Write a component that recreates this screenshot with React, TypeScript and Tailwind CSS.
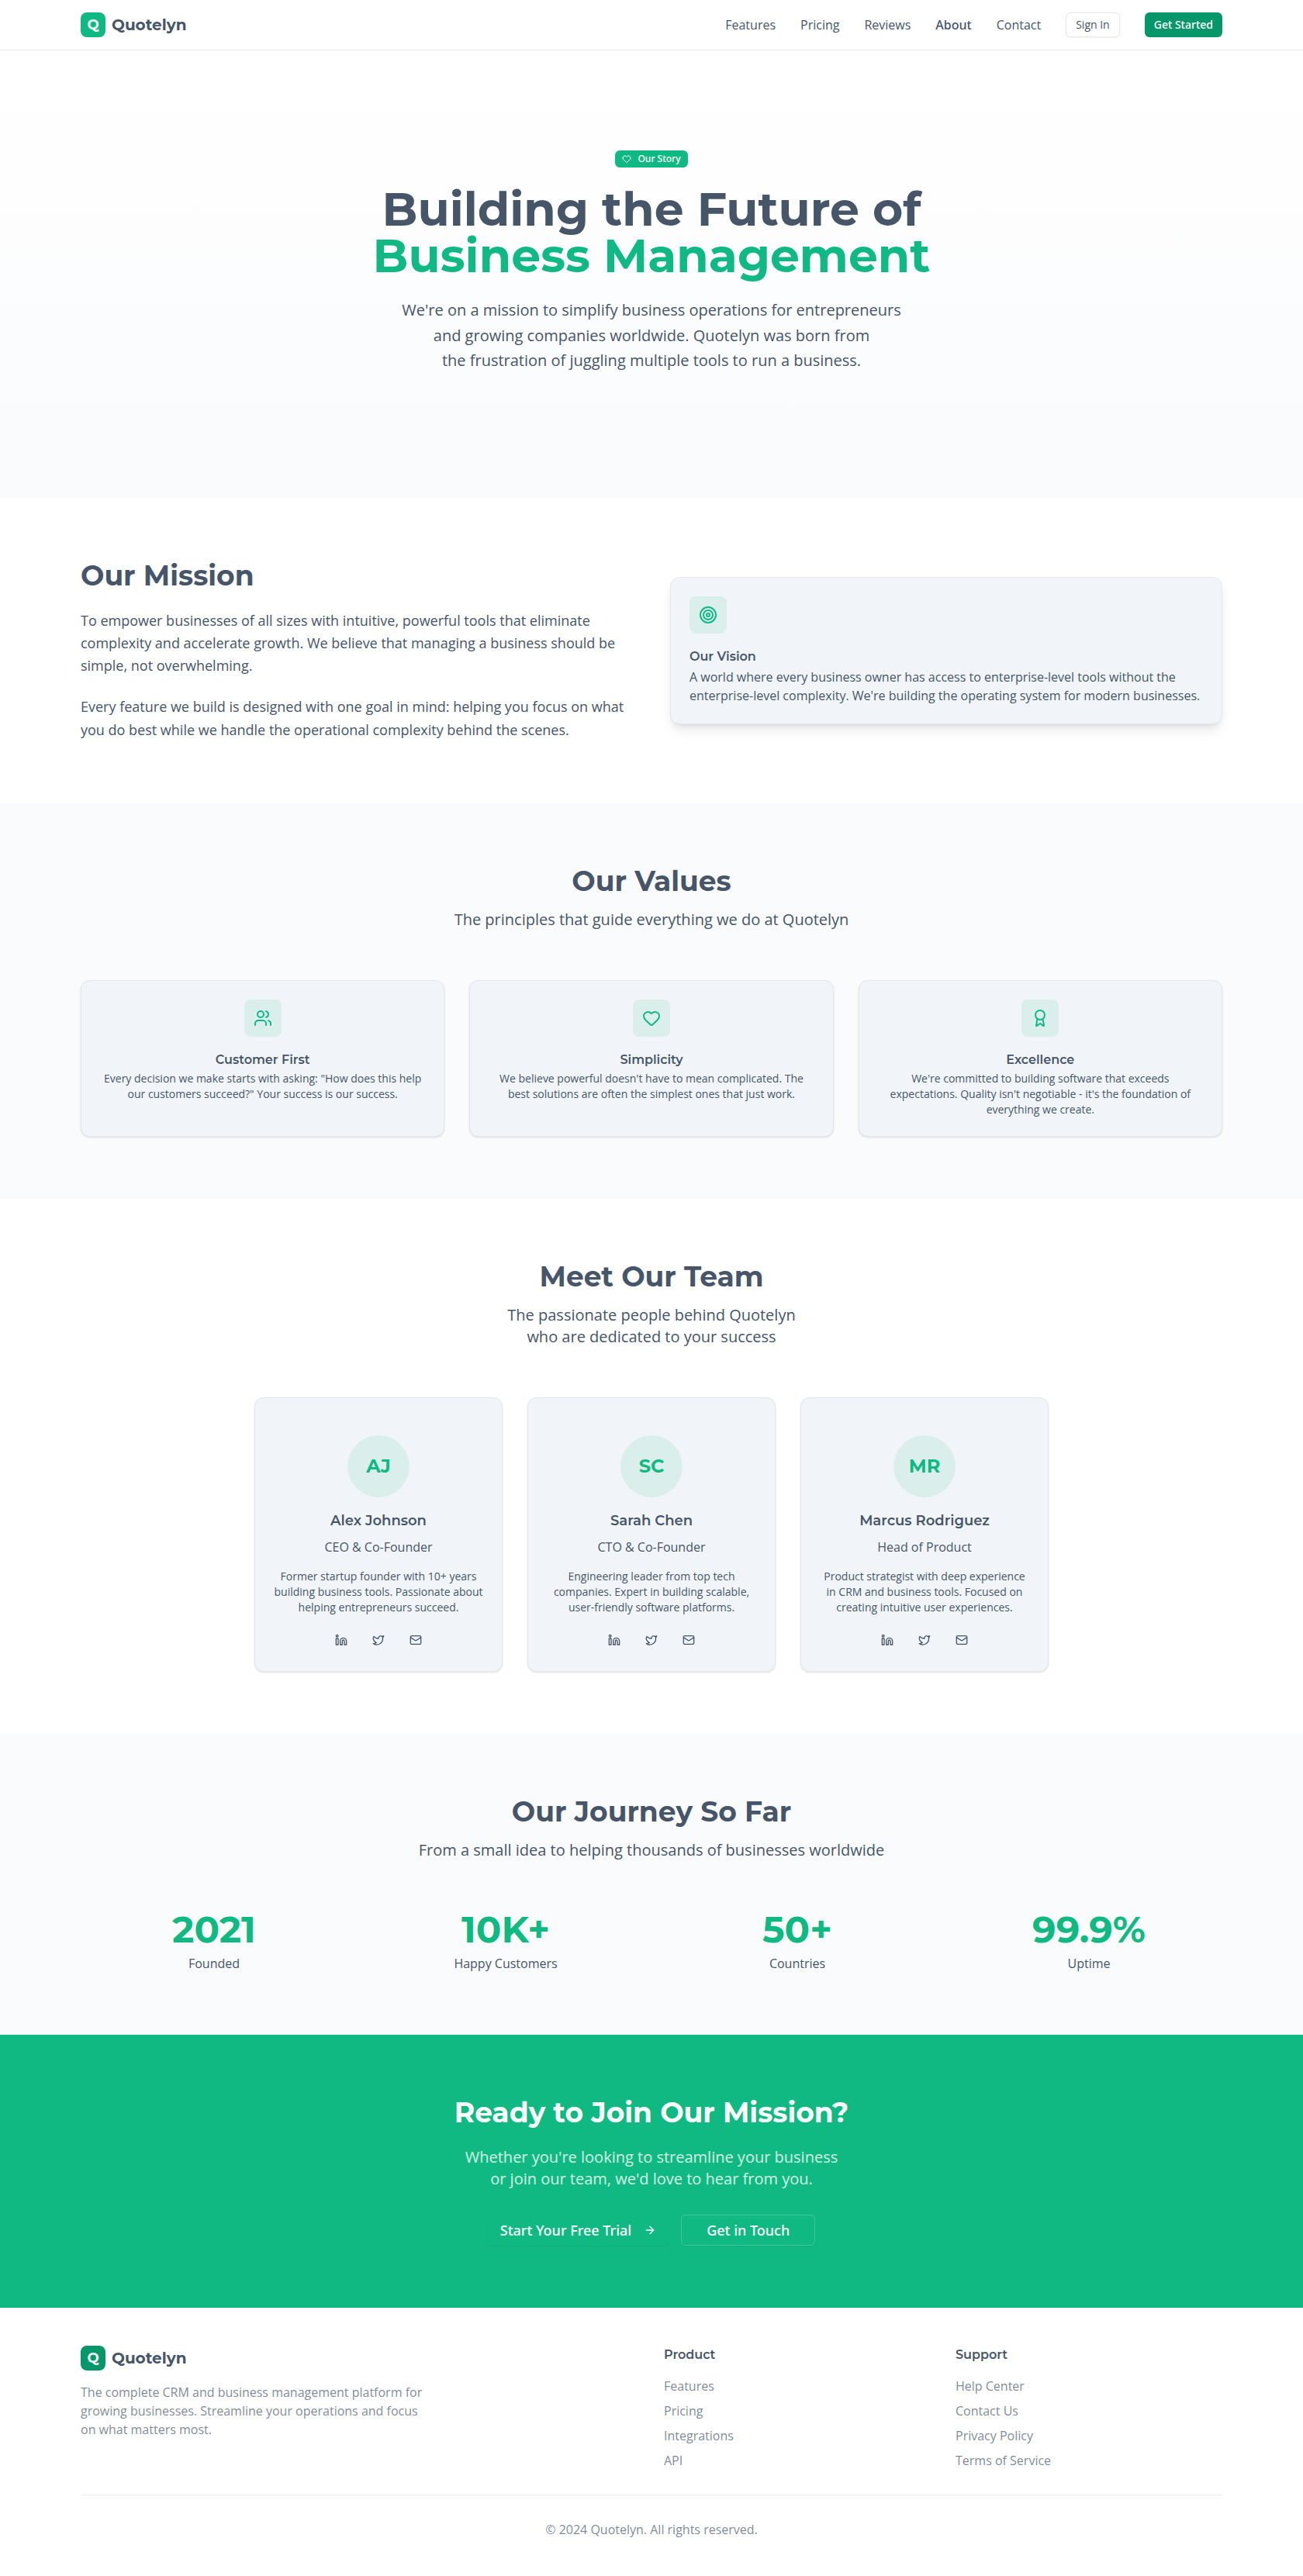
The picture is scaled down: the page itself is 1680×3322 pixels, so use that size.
import type { ReactNode } from "react";
import { ArrowRight, Award, Heart, Linkedin, Mail, Target, Twitter, Users, type LucideIcon } from "lucide-react";

const navLinks = ["Features", "Pricing", "Reviews", "About", "Contact"];

const values: { icon: LucideIcon; title: string; text: string }[] = [
  {
    icon: Users,
    title: "Customer First",
    text: 'Every decision we make starts with asking: "How does this help our customers succeed?" Your success is our success.',
  },
  {
    icon: Heart,
    title: "Simplicity",
    text: "We believe powerful doesn't have to mean complicated. The best solutions are often the simplest ones that just work.",
  },
  {
    icon: Award,
    title: "Excellence",
    text: "We're committed to building software that exceeds expectations. Quality isn't negotiable - it's the foundation of everything we create.",
  },
];

const team = [
  {
    initials: "AJ",
    name: "Alex Johnson",
    role: "CEO & Co-Founder",
    bio: "Former startup founder with 10+ years building business tools. Passionate about helping entrepreneurs succeed.",
  },
  {
    initials: "SC",
    name: "Sarah Chen",
    role: "CTO & Co-Founder",
    bio: "Engineering leader from top tech companies. Expert in building scalable, user-friendly software platforms.",
  },
  {
    initials: "MR",
    name: "Marcus Rodriguez",
    role: "Head of Product",
    bio: "Product strategist with deep experience in CRM and business tools. Focused on creating intuitive user experiences.",
  },
];

const socials: { icon: LucideIcon; label: string }[] = [
  { icon: Linkedin, label: "LinkedIn" },
  { icon: Twitter, label: "Twitter" },
  { icon: Mail, label: "Email" },
];

const stats = [
  { value: "2021", label: "Founded" },
  { value: "10K+", label: "Happy Customers" },
  { value: "50+", label: "Countries" },
  { value: "99.9%", label: "Uptime" },
];

const footerColumns = [
  { title: "Product", links: ["Features", "Pricing", "Integrations", "API"] },
  { title: "Support", links: ["Help Center", "Contact Us", "Privacy Policy", "Terms of Service"] },
];

function Container({ children, className = "" }: { children: ReactNode; className?: string }) {
  return <div className={`mx-auto max-w-[1536px] px-8 ${className}`}>{children}</div>;
}

function Logo({ dark = false }: { dark?: boolean }) {
  return (
    <a href="#" className="flex items-center gap-2 font-['Montserrat','Inter',sans-serif] font-bold">
      <span
        className={`flex size-8 items-center justify-center rounded-lg text-lg text-white ${dark ? "bg-[#059669]" : "bg-[#10b981]"}`}
      >
        Q
      </span>
      <span className="text-xl">Quotelyn</span>
    </a>
  );
}

function SectionHeading({ title, children }: { title: string; children: ReactNode }) {
  return (
    <div className="mb-16 text-center">
      <h2 className="mb-4 font-['Montserrat','Inter',sans-serif] text-4xl font-bold">{title}</h2>
      <p className="mx-auto text-xl">{children}</p>
    </div>
  );
}

function IconTile({ icon: Icon }: { icon: LucideIcon }) {
  return (
    <div className="mb-4 flex size-12 items-center justify-center rounded-lg bg-[#10b981]/10 text-[#10b981]">
      <Icon className="size-6" />
    </div>
  );
}

export default function App() {
  return (
    <div className="min-h-screen bg-white font-['Open_Sans',sans-serif] text-base text-[#475569]">
      <header className="border-b border-gray-200">
        <Container className="flex h-16 items-center justify-between">
          <Logo />
          <nav className="flex items-center gap-8">
            {navLinks.map((link) => (
              <a
                key={link}
                href="#"
                className={link === "About" ? "font-['Noto_Sans','Open_Sans',sans-serif] font-medium" : ""}
              >
                {link}
              </a>
            ))}
            <button className="h-8 rounded-md border border-gray-200 bg-white px-3 text-sm shadow-xs">Sign In</button>
            <button className="h-8 rounded-md bg-[#059669] px-3 font-['Noto_Sans','Open_Sans',sans-serif] text-sm font-medium text-white">
              Get Started
            </button>
          </nav>
        </Container>
      </header>

      <main>
        <section className="bg-linear-to-b from-white to-[#fafbfd] py-32">
          <Container className="text-center">
            <div className="flex justify-center pt-px">
              <span className="mb-6 flex items-center gap-2 rounded-md border border-transparent bg-[#10b981] px-2 py-0.5 font-['Noto_Sans','Open_Sans',sans-serif] text-xs font-medium text-white">
                <Heart className="size-3" />
                Our Story
              </span>
            </div>
            <h1 className="mb-6 font-['Montserrat','Inter',sans-serif] text-6xl leading-none font-bold">
              Building the Future of
              <span className="block text-[#10b981]">Business Management</span>
            </h1>
            <p className="mx-auto mb-8 max-w-3xl text-xl leading-relaxed text-balance">
              We're on a mission to simplify business operations for entrepreneurs and growing companies worldwide.
              Quotelyn was born from the frustration of juggling multiple tools to run a business.
            </p>
          </Container>
        </section>

        <section className="py-20">
          <Container className="grid grid-cols-2 items-center gap-12">
            <div>
              <h2 className="mb-6 font-['Montserrat','Inter',sans-serif] text-4xl font-bold">Our Mission</h2>
              <p className="mb-6 text-lg leading-relaxed">
                To empower businesses of all sizes with intuitive, powerful tools that eliminate complexity and
                accelerate growth. We believe that managing a business should be simple, not overwhelming.
              </p>
              <p className="text-lg leading-relaxed">
                Every feature we build is designed with one goal in mind: helping you focus on what you do best while we
                handle the operational complexity behind the scenes.
              </p>
            </div>
            <article className="flex flex-col gap-1.5 rounded-xl border border-gray-200 bg-[#f1f5f9] p-6 shadow-lg">
              <IconTile icon={Target} />
              <h3 className="font-['Montserrat','Inter',sans-serif] leading-none font-semibold">Our Vision</h3>
              <p>
                A world where every business owner has access to enterprise-level tools without the enterprise-level
                complexity. We're building the operating system for modern businesses.
              </p>
            </article>
          </Container>
        </section>

        <section className="bg-[#fafbfd] py-20">
          <Container>
            <SectionHeading title="Our Values">The principles that guide everything we do at Quotelyn</SectionHeading>
            <div className="grid grid-cols-3 gap-8">
              {values.map((value) => (
                <article
                  key={value.title}
                  className="flex flex-col items-center gap-1.5 rounded-xl border border-gray-200 bg-[#f1f5f9] p-6 text-center shadow-sm"
                >
                  <IconTile icon={value.icon} />
                  <h3 className="font-['Montserrat','Inter',sans-serif] leading-none font-semibold">{value.title}</h3>
                  <p className="text-sm">{value.text}</p>
                </article>
              ))}
            </div>
          </Container>
        </section>

        <section className="py-20">
          <Container>
            <SectionHeading title="Meet Our Team">
              The passionate people behind Quotelyn
              <br />
              who are dedicated to your success
            </SectionHeading>
            <div className="mx-auto grid max-w-5xl grid-cols-3 gap-8">
              {team.map((person) => (
                <article
                  key={person.name}
                  className="flex flex-col items-center rounded-xl border border-gray-200 bg-[#f1f5f9] px-6 pt-12 pb-6 text-center shadow-sm"
                >
                  <div className="mb-4 flex size-20 items-center justify-center rounded-full bg-[#10b981]/10 font-['Montserrat','Inter',sans-serif] text-2xl font-bold text-[#10b981]">
                    {person.initials}
                  </div>
                  <h3 className="mb-2 font-['Montserrat','Inter',sans-serif] text-lg font-semibold">{person.name}</h3>
                  <p className="mb-4">{person.role}</p>
                  <p className="mb-4 text-sm">{person.bio}</p>
                  <div className="flex gap-2">
                    {socials.map(({ icon: Icon, label }) => (
                      <button key={label} aria-label={label} className="flex h-8 w-10 items-center justify-center">
                        <Icon className="size-4" />
                      </button>
                    ))}
                  </div>
                </article>
              ))}
            </div>
          </Container>
        </section>

        <section className="bg-[#fafbfd] py-20">
          <Container>
            <SectionHeading title="Our Journey So Far">
              From a small idea to helping thousands of businesses worldwide
            </SectionHeading>
            <div className="grid grid-cols-4 gap-8 text-center">
              {stats.map((stat) => (
                <div key={stat.label}>
                  <div className="mb-2 font-['Montserrat','Inter',sans-serif] text-5xl font-bold text-[#10b981]">
                    {stat.value}
                  </div>
                  <div>{stat.label}</div>
                </div>
              ))}
            </div>
          </Container>
        </section>

        <section className="bg-[#10b981] py-20 text-white">
          <Container className="text-center">
            <h2 className="mb-6 font-['Montserrat','Inter',sans-serif] text-4xl font-bold">
              Ready to Join Our Mission?
            </h2>
            <p className="mb-8 text-xl text-white/80">
              Whether you're looking to streamline your business
              <br />
              or join our team, we'd love to hear from you.
            </p>
            <div className="flex justify-center gap-4 font-['Noto_Sans','Open_Sans',sans-serif] text-lg font-medium">
              <button className="flex h-10 items-center gap-4 rounded-md px-4 shadow-xs">
                Start Your Free Trial
                <ArrowRight className="size-4" />
              </button>
              <button className="h-10 rounded-md border border-white/20 px-8 shadow-xs">Get in Touch</button>
            </div>
          </Container>
        </section>
      </main>

      <footer className="border-t border-gray-200 py-12">
        <Container>
          <div className="grid grid-cols-4 gap-8">
            <div className="col-span-2">
              <div className="mb-4 flex">
                <Logo dark />
              </div>
              <p className="max-w-md text-[#475569]/70">
                The complete CRM and business management platform for growing businesses. Streamline your operations and
                focus on what matters most.
              </p>
            </div>
            {footerColumns.map((column) => (
              <div key={column.title}>
                <h4 className="mb-4 font-['Montserrat','Inter',sans-serif] font-semibold">{column.title}</h4>
                <ul className="space-y-2 text-[#475569]/70">
                  {column.links.map((link) => (
                    <li key={link}>
                      <a href="#">{link}</a>
                    </li>
                  ))}
                </ul>
              </div>
            ))}
          </div>
          <div className="mt-8 border-t border-gray-200 pt-8 text-center text-[#475569]/70">
            © 2024 Quotelyn. All rights reserved.
          </div>
        </Container>
      </footer>
    </div>
  );
}
